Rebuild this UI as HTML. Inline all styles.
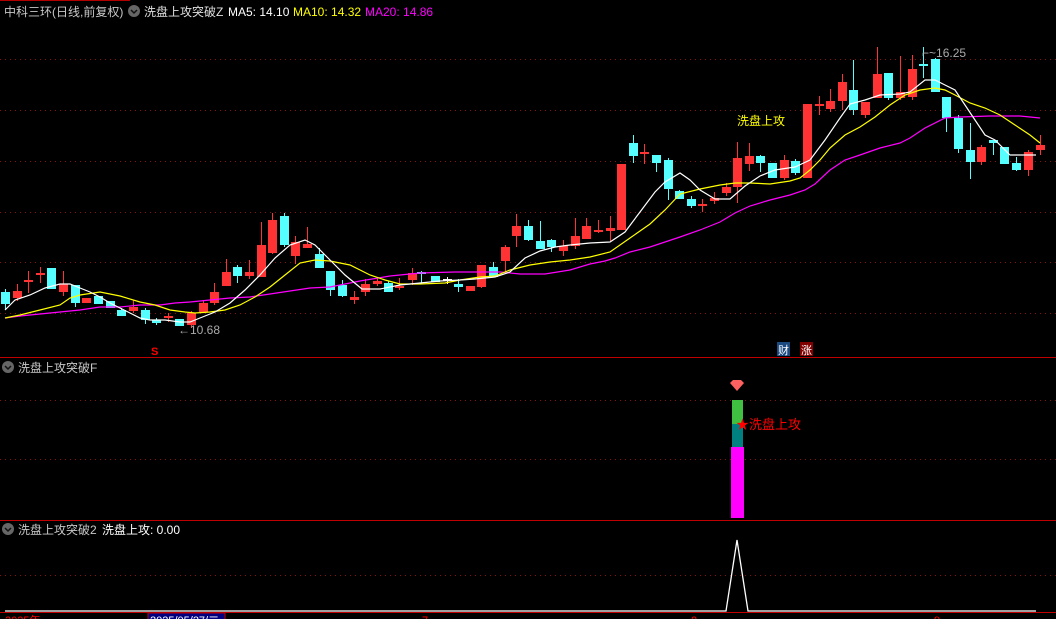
<!DOCTYPE html>
<html><head><meta charset="utf-8"><style>
html,body{margin:0;padding:0;background:#000;width:1056px;height:619px;overflow:hidden}
svg{display:block}
text{font-family:"Liberation Sans","Noto Sans CJK SC",sans-serif}
</style></head><body>
<svg id="s" width="1056" height="619" viewBox="0 0 1056 619" xmlns="http://www.w3.org/2000/svg">
<rect width="1056" height="619" fill="#000"/>
<line x1="0" y1="0.5" x2="130" y2="0.5" stroke="#b00000"/>
<g stroke="#8a1010" stroke-dasharray="1,4" stroke-width="1">
<line x1="0" y1="59.5" x2="1056" y2="59.5"/><line x1="0" y1="110.5" x2="1056" y2="110.5"/>
<line x1="0" y1="161.5" x2="1056" y2="161.5"/><line x1="0" y1="212.5" x2="1056" y2="212.5"/>
<line x1="0" y1="262.5" x2="1056" y2="262.5"/><line x1="0" y1="313.5" x2="1056" y2="313.5"/>
<line x1="0" y1="400.5" x2="1056" y2="400.5"/><line x1="0" y1="459.5" x2="1056" y2="459.5"/>
<line x1="0" y1="575.5" x2="1056" y2="575.5"/>
</g>
<line x1="0" y1="357.5" x2="1056" y2="357.5" stroke="#c00000"/>
<line x1="0" y1="520.5" x2="1056" y2="520.5" stroke="#c00000"/>
<g id="c"></g>
<polyline fill="none" stroke="#ff00ff" stroke-width="1.2" points="5,318 20,316 40,314 60,312 80,310 100,307 120,307 140,305 160,305 175,303 190,302 210,300 230,298 250,297 270,294 290,291 310,288 330,287 360,281 390,276 420,273 455,272 500,272 520,274 545,274 570,270 590,264 605,261 615,258 630,252 650,247 665,242 680,237 700,230 720,222 735,213 750,206 770,200 790,195 805,190 815,184 830,170 845,160 860,155 880,148 900,143 910,138 925,128 945,118 960,117 990,116 1020,116 1040,118"/>
<polyline fill="none" stroke="#ffff00" stroke-width="1.2" points="5,318 20,315 40,310 60,305 70,298 80,295 100,292 120,296 140,302 155,305 170,310 185,312 195,313 210,312 225,310 240,305 255,297 270,287 285,275 300,263 315,260 330,261 350,265 370,275 385,280 400,284 420,284 445,283 460,280 480,277 495,276 510,270 530,265 550,262 570,260 590,257 610,252 630,238 650,224 665,210 680,194 700,189 720,185 735,183 750,183 770,184 790,181 800,178 810,170 820,160 830,148 845,135 860,127 875,117 890,105 905,95 920,90 935,88 945,90 955,95 970,103 985,108 1000,115 1015,125 1030,135 1040,143"/>
<polyline fill="none" stroke="#ffffff" stroke-width="1.2" points="5,310 15,300 30,295 45,288 60,284 70,284 80,288 90,292 100,297 110,303 120,308 130,313 140,318 150,320 165,320 180,322 190,322 200,318 215,312 230,303 245,290 260,275 275,258 290,245 305,240 315,245 325,255 335,265 345,275 362,289 380,289 400,285 420,283 440,281 460,280 475,279 495,277 510,272 525,258 540,251 555,247 570,245 590,243 610,242 625,232 640,212 655,192 665,182 680,173 690,180 700,190 715,199 730,199 745,186 760,176 775,170 795,167 810,160 825,140 840,118 850,104 865,100 880,95 900,94 910,92 925,80 935,80 945,85 955,90 965,105 975,120 985,135 995,140 1010,155 1020,155 1036,155"/>
<text x="4" y="16" font-size="12" fill="#c8c8c8">中科三环(日线,前复权)</text>
<circle cx="134" cy="11" r="6" fill="#666"/><path d="M131 10 l3 3 3-3" stroke="#111" fill="none" stroke-width="1.5"/>
<text x="144" y="16" font-size="12" fill="#e0e0e0">洗盘上攻突破Z</text>
<text x="228" y="16" font-size="12" fill="#fff">MA5: 14.10</text>
<text x="293" y="16" font-size="12" fill="#ffff00">MA10: 14.32</text>
<text x="365" y="16" font-size="12" fill="#ff00ff">MA20: 14.86</text>
<text x="737" y="125" font-size="12" fill="#ffff00">洗盘上攻</text>
<text x="178" y="334" font-size="12" fill="#aaa">←10.68</text>
<text x="922" y="57" font-size="12" fill="#aaa">⌐~16.25</text>
<text x="151" y="355" font-size="11" fill="#f00" font-weight="bold">S</text>
<rect x="777" y="342" width="13" height="14" fill="#1a4a80"/><text x="778" y="354" font-size="11" fill="#fff">财</text>
<rect x="800" y="342" width="13" height="14" fill="#800000"/><text x="801" y="354" font-size="11" fill="#fff">涨</text>
<circle cx="8" cy="367" r="6" fill="#666"/><path d="M5 366 l3 3 3-3" stroke="#111" fill="none" stroke-width="1.5"/>
<text x="18" y="372" font-size="12" fill="#c8c8c8">洗盘上攻突破F</text>
<rect x="732" y="400" width="11" height="24" fill="#40c040"/>
<rect x="732" y="424" width="11" height="23" fill="#008080"/>
<rect x="731" y="447" width="13" height="71" fill="#ff00ff"/>
<path d="M730 383 l3-3 h8 l3 3 -7 8z" fill="#ff6060"/>
<text x="736" y="429" font-size="13" fill="#f00">★洗盘上攻</text>
<circle cx="8" cy="529" r="6" fill="#666"/><path d="M5 528 l3 3 3-3" stroke="#111" fill="none" stroke-width="1.5"/>
<text x="18" y="534" font-size="12" fill="#c8c8c8">洗盘上攻突破2</text>
<text x="102" y="534" font-size="12" fill="#fff">洗盘上攻: 0.00</text>
<polyline fill="none" stroke="#fff" stroke-width="1.3" points="5,611 726,611 737,540 748,611 1036,611"/>
<line x1="0" y1="612.5" x2="1056" y2="612.5" stroke="#c00000"/>
<text x="5" y="624" font-size="11" fill="#f00">2025年</text>
<rect x="148" y="613" width="77" height="8" fill="#000080" stroke="#c00000"/>
<text x="150" y="624" font-size="11" fill="#fff">2025/05/27/二</text>
<text x="422" y="624" font-size="11" fill="#f00">7</text>
<text x="691" y="624" font-size="11" fill="#f00">8</text>
<text x="934" y="624" font-size="11" fill="#f00">9</text>
</svg>
<script>
var R="#ff3333",C="#55ffff";
var d=[[5,292,304,289,310,C],[17,291,298,284,301,R],[28,280,282,271,293,R],[40,273,275,267,283,R],[51,268,289,268,289,C],[63,284,292,271,296,R],[75,285,303,285,307,C],[86,298,303,298,303,R],[98,296,304,296,304,C],[110,301,308,301,308,C],[121,310,316,308,316,C],[133,307,311,300,313,R],[145,310,320,308,324,C],[156,320,323,318,325,C],[168,316,318,313,322,R],[179,319,326,319,326,C],[191,313,325,311,328,R],[203,303,312,300,312,R],[214,292,303,283,305,R],[226,272,286,259,286,R],[237,267,276,265,283,C],[249,272,276,260,279,R],[261,245,277,222,277,R],[272,220,253,213,254,R],[284,216,245,213,247,C],[295,242,256,236,264,R],[307,244,248,227,248,R],[319,254,268,248,268,C],[330,271,290,271,296,C],[342,285,296,280,297,C],[354,297,300,291,304,R],[365,284,292,279,296,R],[377,281,284,278,286,R],[388,283,292,281,292,C],[399,286,288,278,290,R],[412,273,280,268,285,R],[421,272,274,271,283,C],[435,276,282,276,282,C],[447,279,281,277,284,"#fff"],[458,284,287,279,292,C],[470,286,291,286,291,R],[481,265,287,265,288,R],[493,267,277,262,277,C],[505,247,261,245,273,R],[516,226,236,214,247,R],[528,226,240,220,241,C],[540,241,249,221,249,C],[551,240,247,239,252,C],[563,246,251,240,256,R],[575,236,246,218,249,R],[586,226,239,218,239,R],[598,230,232,220,233,R],[610,228,231,216,241,R],[621,164,230,164,230,R],[633,143,156,135,163,C],[644,152,154,144,164,R],[656,155,163,155,172,C],[668,160,189,158,200,C],[679,191,199,190,199,C],[691,199,206,196,208,C],[702,204,206,199,212,R],[714,198,201,192,204,R],[726,187,193,183,196,R],[737,158,187,142,203,R],[749,156,164,143,171,R],[760,156,163,155,172,C],[772,163,178,163,178,C],[784,160,178,155,180,R],[795,161,173,159,175,C],[807,104,178,104,178,R],[819,104,106,96,115,R],[830,101,109,89,112,R],[842,82,101,74,110,R],[853,90,110,60,115,C],[865,102,115,102,118,R],[877,74,98,47,98,R],[888,73,98,73,100,C],[900,92,98,56,100,R],[912,69,97,55,100,R],[923,64,66,47,78,C],[935,59,92,58,92,C],[946,97,118,97,132,C],[958,118,149,115,153,C],[970,150,162,123,179,C],[981,147,162,145,165,R],[993,140,143,140,155,C],[1004,147,164,147,164,C],[1016,163,170,157,171,C],[1028,152,170,150,176,R],[1040,145,150,135,155,R]];
var g=document.getElementById("c"),h="";
d.forEach(function(a){h+='<line x1="'+(a[0]+.5)+'" y1="'+a[3]+'" x2="'+(a[0]+.5)+'" y2="'+a[4]+'" stroke="'+a[5]+'"/>';
h+='<rect x="'+(a[0]-4)+'" y="'+a[1]+'" width="9" height="'+Math.max(1.5,a[2]-a[1])+'" fill="'+a[5]+'"/>';});
g.innerHTML=h;
</script>
</body></html>
